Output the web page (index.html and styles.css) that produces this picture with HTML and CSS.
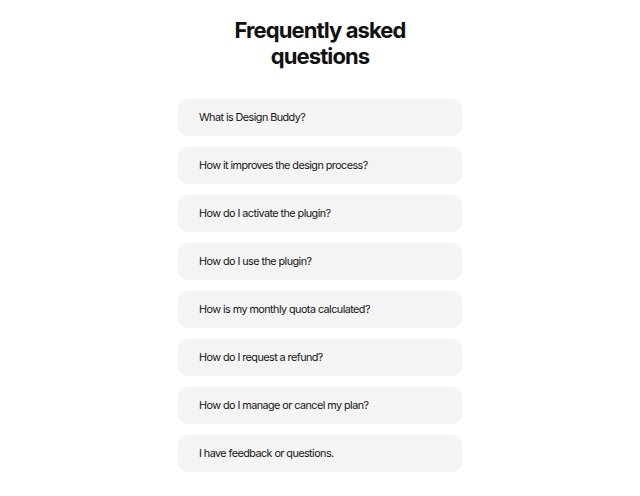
FILE: index.html
```html
<!DOCTYPE html>
<html lang="en">
<head>
<meta charset="utf-8">
<title>FAQ</title>
<link rel="stylesheet" href="styles.css">
</head>
<body>
<main class="faq">
  <h1 class="faq-title">Frequently asked<br>questions</h1>
  <ul class="faq-list">
    <li class="faq-item">What is Design Buddy?</li>
    <li class="faq-item">How it improves the design process?</li>
    <li class="faq-item">How do I activate the plugin?</li>
    <li class="faq-item">How do I use the plugin?</li>
    <li class="faq-item">How is my monthly quota calculated?</li>
    <li class="faq-item">How do I request a refund?</li>
    <li class="faq-item">How do I manage or cancel my plan?</li>
    <li class="faq-item">I have feedback or questions.</li>
  </ul>
</main>
</body>
</html>
```
FILE: styles.css
```css
* { box-sizing: border-box; }
html, body { margin: 0; padding: 0; background: #ffffff; }
body {
  font-family: Inter, "Liberation Sans", sans-serif;
  color: #111111;
}
.faq {
  display: flex;
  flex-direction: column;
  align-items: center;
  padding-top: 17px;
}
.faq-title {
  margin: 0;
  font-size: 22px;
  line-height: 26px;
  font-weight: 700;
  letter-spacing: -0.9px;
  text-align: center;
}
.faq-list {
  list-style: none;
  margin: 30px 0 0;
  padding: 0;
  width: 284px;
  display: flex;
  flex-direction: column;
  gap: 11px;
}
.faq-item {
  height: 37px;
  display: flex;
  align-items: center;
  padding: 0 21px;
  background: #f4f4f4;
  border-radius: 10px;
  font-size: 10.8px;
  font-weight: 400;
  letter-spacing: -0.55px;
  color: #151515;
}
```
